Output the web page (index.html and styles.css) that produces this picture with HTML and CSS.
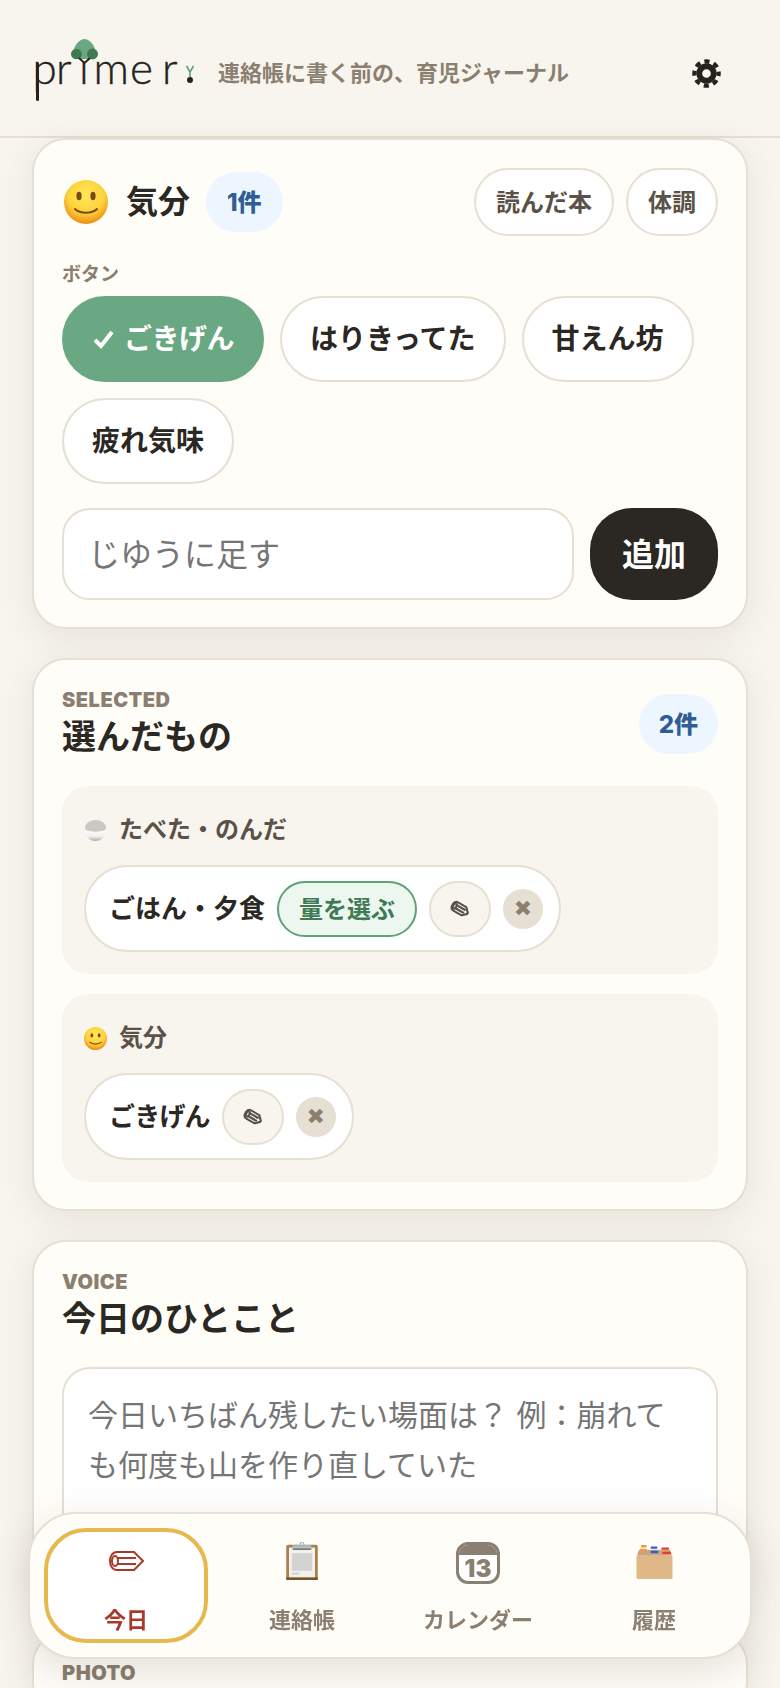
FILE: index.html
```html
<!DOCTYPE html>
<html lang="ja">
<head>
    <meta charset="UTF-8">
    <meta name="viewport" content="width=device-width, initial-scale=1.0">
    <title>primer</title>
    <link rel="stylesheet" href="styles.css">
</head>
<body>
    <header class="app-header">
        <div class="brand">
            <svg class="logo" width="162" height="72" viewBox="0 0 162 72">
                <text class="logo-word" y="46" x="-2.5 21 44 58.5 95 127">primer</text>
                <rect x="1" y="24" width="3" height="39" rx="1.5" fill="#25221e"/>
                <path d="M38 14 C40 6 45 1 49.5 1 C54 1 59 6 61 14 C61 19 57 21 49.5 21 C42 21 38 19 38 14Z" fill="#6aa883"/>
                <ellipse cx="41.5" cy="16" rx="5.5" ry="5.2" fill="#3f7a54"/>
                <ellipse cx="57.5" cy="16" rx="5.5" ry="5.4" fill="#3f7a54"/>
                <path d="M44 20 L49.5 25 L55 20" fill="none" stroke="#25221e" stroke-width="2"/>
                <path d="M151.500 28 L155 34 L158.500 28 M155 34 V39" fill="none" stroke="#5f9f78" stroke-width="1.6"/>
                <circle cx="155" cy="42" r="3" fill="#25221e"/>
            </svg>
            <span class="tagline">連絡帳に書く前の、育児ジャーナル</span>
        </div>
        <svg class="gear" width="29" height="29" viewBox="0 0 30 30">
            <circle cx="15" cy="15" r="7.500" fill="none" stroke="#25221e" stroke-width="6"/>
            <circle cx="15" cy="15" r="12.500" fill="none" stroke="#25221e" stroke-width="4.500" stroke-dasharray="5.300 4.520" stroke-dashoffset="2.600"/>
        </svg>
    </header>

    <main class="page">
        <section class="card">
            <div class="mood-head">
                <svg class="emoji-lg" viewBox="0 0 44 44"><use href="#smile"/></svg>
                <h2 class="mood-title">気分</h2>
                <span class="count count-sm">1件</span>
                <div class="tabs">
                    <button class="tab">読んだ本</button>
                    <button class="tab">体調</button>
                </div>
            </div>
            <div class="field-label">ボタン</div>
            <div class="chips">
                <button class="chip chip-on">
                    <svg class="check" width="23" height="22" viewBox="0 0 23 22"><path d="M3 12 L9 18 L20 4" fill="none" stroke="#fff" stroke-width="4"/></svg>
                    ごきげん
                </button>
                <button class="chip">はりきってた</button>
                <button class="chip">甘えん坊</button>
                <button class="chip">疲れ気味</button>
            </div>
            <div class="add-row">
                <div class="add-input">じゆうに足す</div>
                <button class="add-btn">追加</button>
            </div>
        </section>

        <section class="card">
            <div class="section-head">
                <div>
                    <div class="eyebrow">SELECTED</div>
                    <h2 class="section-title">選んだもの</h2>
                </div>
                <span class="count">2件</span>
            </div>
            <div class="group">
                <div class="group-title">
                    <svg class="emoji-sm" viewBox="0 0 24 24">
                        <defs>
                            <linearGradient id="bowl" x1="0" y1="0" x2="0" y2="1">
                                <stop offset="0" stop-color="#ffffff"/>
                                <stop offset="0.6" stop-color="#f0f0ee"/>
                                <stop offset="1" stop-color="#a9a9a6"/>
                            </linearGradient>
                        </defs>
                        <ellipse cx="12" cy="9" rx="11" ry="8" fill="#c9c8c3"/>
                        <path d="M0.6 11 C5 14 19 14 23.400 11 C23 18 18 23 12 23 C6 23 1 18 0.6 11Z" fill="url(#bowl)"/>
                    </svg>
                    たべた・のんだ
                </div>
                <div class="item">
                    <span class="item-name">ごはん・夕食</span>
                    <button class="amount">量を選ぶ</button>
                    <button class="edit"><svg class="edit-pencil" width="20" height="12" viewBox="0 0 36 22"><use href="#pencil"/></svg></button>
                    <button class="remove">✖</button>
                </div>
            </div>
            <div class="group">
                <div class="group-title">
                    <svg class="emoji-sm" viewBox="0 0 44 44"><use href="#smile"/></svg>
                    気分
                </div>
                <div class="item">
                    <span class="item-name item-name-tight">ごきげん</span>
                    <button class="edit"><svg class="edit-pencil" width="20" height="12" viewBox="0 0 36 22"><use href="#pencil"/></svg></button>
                    <button class="remove">✖</button>
                </div>
            </div>
        </section>

        <section class="card">
            <div class="eyebrow">VOICE</div>
            <h2 class="section-title">今日のひとこと</h2>
            <div class="voice-box">今日いちばん残したい場面は？ 例：崩れても何度も山を作り直していた</div>
        </section>

        <section class="card">
            <div class="eyebrow">PHOTO</div>
        </section>
    </main>

    <nav class="bottom-nav">
        <a class="nav-item nav-active">
            <svg class="nav-icon icon-pencil" width="36" height="22" viewBox="0 0 36 22"><use href="#pencil"/></svg>
            <span class="nav-label">今日</span>
        </a>
        <a class="nav-item">
            <svg class="nav-icon" width="34" height="39" viewBox="0 0 36 42">
                <rect x="1" y="3" width="34" height="38" rx="2" fill="#ac8049"/>
                <rect x="1" y="38" width="34" height="3" rx="1" fill="#7a5528"/>
                <rect x="4" y="6" width="28" height="32" fill="#f1f1f0"/>
                <rect x="7" y="12" width="22" height="19" fill="#d3d3d2"/>
                <rect x="7" y="33" width="8" height="2" fill="#cfcfce"/>
                <rect x="8" y="3.500" width="20" height="4" fill="#b4bcc6"/>
                <rect x="8" y="7" width="20" height="1.500" fill="#6e6a62"/>
                <circle cx="18" cy="2.500" r="2" fill="none" stroke="#a8b3c0" stroke-width="1.200"/>
            </svg>
            <span class="nav-label">連絡帳</span>
        </a>
        <a class="nav-item">
            <span class="nav-icon cal">
                <span class="cal-top"></span>
                <span class="cal-num">13</span>
            </span>
            <span class="nav-label">カレンダー</span>
        </a>
        <a class="nav-item">
            <svg class="nav-icon icon-box" width="37" height="35" viewBox="0 0 38 36">
                <path d="M3 6 L35 6 L37 12 L1 12Z" fill="#c9a677"/>
                <rect x="5" y="1" width="6" height="2.600" rx="1" fill="#ee9a44"/>
                <rect x="4" y="5" width="7" height="2.600" rx="1" fill="#ee9a44"/>
                <rect x="15" y="2.500" width="7" height="2.400" rx="1" fill="#3a57e0"/>
                <rect x="15" y="7" width="8" height="2.400" rx="1" fill="#3a57e0"/>
                <rect x="26" y="3.500" width="8" height="2.400" rx="1" fill="#e8383a"/>
                <rect x="27" y="8" width="9" height="2.400" rx="1" fill="#e8383a"/>
                <rect x="0.5" y="12" width="37" height="24" rx="1.500" fill="#e0b888"/>
            </svg>
            <span class="nav-label">履歴</span>
        </a>
    </nav>

    <svg class="defs" width="0" height="0">
        <defs>
            <radialGradient id="face" cx="50%" cy="35%" r="68%">
                <stop offset="0" stop-color="#ffe85c"/>
                <stop offset="0.6" stop-color="#fdd23a"/>
                <stop offset="1" stop-color="#ea8410"/>
            </radialGradient>
            <symbol id="smile" viewBox="0 0 44 44">
                <circle cx="22" cy="22" r="22" fill="url(#face)"/>
                <ellipse cx="15" cy="16" rx="2.600" ry="4.200" fill="#7a4a12"/>
                <ellipse cx="29" cy="16" rx="2.600" ry="4.200" fill="#7a4a12"/>
                <path d="M11 29 C16 34 28 34 33 29" fill="none" stroke="#7a4a12" stroke-width="2" stroke-linecap="round"/>
            </symbol>
            <symbol id="pencil" viewBox="0 0 36 22">
                <g class="pencil-lines" fill="none" stroke="currentColor">
                    <path d="M9 2 H26 L35 11 L26 20 H9 C4 20 2 15 2 11 C2 7 4 2 9 2Z"/>
                    <ellipse cx="7" cy="11" rx="3" ry="5"/>
                    <path d="M10 8 H28 M10 14 H28"/>
                </g>
            </symbol>
        </defs>
    </svg>
</body>
</html>
```

FILE: styles.css
```css
:root {
    --bg: #f8f5ef;
    --card: #fffdf8;
    --line: #e6dfd3;
    --ink: #2b2722;
    --ink-soft: #5a5248;
    --muted: #8a7f70;
    --green: #6aa883;
    --blue: #2f5d94;
}

* {
    box-sizing: border-box;
}

html, body {
    height: 1688px;
    overflow: hidden;
}

body {
    margin: 0;
    background-color: var(--bg);
    color: var(--ink);
    font-family: Inter, "Noto Sans CJK JP", sans-serif;
}

h2 {
    margin: 0;
}

button {
    font-family: inherit;
    font-weight: 700;
    color: inherit;
    cursor: pointer;
}

.defs {
    position: absolute;
}

.pencil-lines {
    stroke-width: var(--pencil-stroke, 2);
}

.app-header {
    height: 138px;
    padding: 11px 59px 0 35px;
    display: flex;
    align-items: center;
    justify-content: space-between;
    border-bottom: 2px solid var(--line);
}

.brand {
    display: flex;
    align-items: center;
    gap: 21px;
}

.logo {
    flex: none;
    overflow: visible;
}

.logo-word {
    font-family: Lato, sans-serif;
    font-size: 44px;
    font-weight: 300;
    fill: #25221e;
    stroke: #25221e;
    stroke-width: 0.4px;
}

.tagline {
    font-size: 22px;
    font-weight: 700;
    color: var(--muted);
    margin-bottom: 6px;
}

.page {
    padding: 0 32px;
    display: flex;
    flex-direction: column;
    gap: 29px;
}

.card {
    background-color: var(--card);
    border: 2px solid var(--line);
    border-radius: 34px;
    padding: 28px 28px 27px;
    box-shadow: 0 8px 36px rgba(80, 70, 50, 0.1);
}

.mood-head {
    display: flex;
    align-items: center;
}

.emoji-lg {
    width: 44px;
    height: 44px;
    margin-left: 2px;
    margin-right: 18px;
}

.mood-title {
    font-size: 32px;
    line-height: 44px;
    font-weight: 700;
    margin-right: 16px;
}

.count {
    background-color: #edf5ff;
    color: var(--blue);
    font-size: 24px;
    font-weight: 800;
    height: 60px;
    padding: 0 20px 4px;
    display: flex;
    align-items: center;
    border-radius: 30px;
}

.count-sm {
    padding: 0 21px 4px;
}

.tabs {
    margin-left: auto;
    display: flex;
    gap: 12px;
}

.tab {
    height: 68px;
    padding: 0 20px 4px;
    font-size: 24px;
    color: var(--ink-soft);
    background-color: #fff;
    border: 2px solid var(--line);
    border-radius: 34px;
}

.field-label {
    margin-top: 25px;
    font-size: 19px;
    line-height: 28px;
    font-weight: 700;
    color: var(--muted);
}

.chips {
    margin-top: 7px;
    display: flex;
    flex-wrap: wrap;
    gap: 16px;
}

.chip {
    height: 86px;
    padding: 0 28px 4px;
    display: flex;
    align-items: center;
    font-size: 28px;
    background-color: #fff;
    border: 2px solid var(--line);
    border-radius: 43px;
}

.chip-on {
    letter-spacing: -0.5px;
    background-color: var(--green);
    border-color: var(--green);
    color: #fff;
}

.check {
    margin-right: 9px;
    margin-top: 4px;
}

.add-row {
    margin-top: 24px;
    display: flex;
    gap: 16px;
}

.add-input {
    flex: 1;
    height: 92px;
    padding: 0 24px 4px;
    display: flex;
    align-items: center;
    font-size: 32px;
    color: #757575;
    background-color: #fff;
    border: 2px solid var(--line);
    border-radius: 28px;
}

.add-btn {
    width: 128px;
    height: 92px;
    padding: 0 0 4px;
    font-size: 32px;
    color: #fff;
    background-color: var(--ink);
    border: none;
    border-radius: 42px;
}

.section-head {
    display: flex;
    justify-content: space-between;
    align-items: center;
}

.eyebrow {
    font-size: 20px;
    line-height: 24px;
    font-weight: 900;
    letter-spacing: 0.5px;
    margin-bottom: 2px;
    color: var(--muted);
}

.section-title {
    font-size: 34px;
    line-height: 46px;
    font-weight: 700;
}

.group {
    margin-top: 20px;
    padding: 26px 22px 22px;
    background-color: var(--bg);
    border-radius: 26px;
}

.section-head + .group {
    margin-top: 26px;
}

.group-title {
    display: flex;
    align-items: center;
    gap: 12px;
    font-size: 24px;
    line-height: 36px;
    font-weight: 700;
    color: var(--ink-soft);
}

.emoji-sm {
    width: 23px;
    height: 23px;
}

.item {
    margin-top: 17px;
    display: inline-flex;
    align-items: center;
    vertical-align: top;
    height: 87px;
    padding: 0 16px 0 23px;
    background-color: #fff;
    border: 2px solid var(--line);
    border-radius: 44px;
}

.item-name {
    font-size: 26px;
    font-weight: 700;
    margin-right: 12px;
    margin-bottom: 4px;
}

.item-name-tight {
    letter-spacing: -0.8px;
}

.amount {
    height: 56px;
    padding: 0 20px 2px;
    font-size: 24px;
    color: #3d7a55;
    background-color: #edf7f0;
    border: 2px solid #5fa27a;
    border-radius: 28px;
    margin-right: 12px;
}

.edit {
    --pencil-stroke: 4;
    width: 62px;
    height: 56px;
    padding: 0;
    display: flex;
    align-items: center;
    justify-content: center;
    color: var(--ink-soft);
    background-color: var(--bg);
    border: 2px solid var(--line);
    border-radius: 28px;
    margin-right: 12px;
}

.edit-pencil {
    transform: rotate(30deg);
}

.remove {
    width: 40px;
    height: 40px;
    padding: 0;
    font-family: "DejaVu Sans", sans-serif;
    font-size: 22px;
    line-height: 40px;
    font-weight: 400;
    color: var(--muted);
    background-color: var(--line);
    border: none;
    border-radius: 50%;
}

.voice-box {
    margin-top: 25px;
    height: 206px;
    padding: 21px 24px;
    font-size: 30px;
    line-height: 50px;
    color: #757575;
    background-color: #fff;
    border: 2px solid var(--line);
    border-radius: 28px;
}

.bottom-nav {
    position: fixed;
    left: 28px;
    top: 1512px;
    width: 724px;
    height: 147px;
    padding: 14px;
    display: grid;
    grid-template-columns: repeat(4, 164px);
    gap: 12px;
    background-color: var(--card);
    border: 2px solid var(--line);
    border-radius: 48px;
    box-shadow: 0 12px 40px rgba(60, 50, 30, 0.14);
}

.nav-item {
    display: flex;
    flex-direction: column;
    align-items: center;
    justify-content: flex-end;
    padding-bottom: 3px;
    position: relative;
    border: 4px solid transparent;
    border-radius: 42px;
}

.nav-active {
    background-color: #fff;
    border-color: #e5b94e;
}

.nav-icon {
    position: absolute;
    top: 10px;
}

.icon-pencil {
    top: 18px;
    color: #a83a2c;
}

.icon-box {
    top: 12px;
}

.cal {
    width: 44px;
    height: 42px;
    border: 3px solid var(--muted);
    border-radius: 12px;
    background-color: #fff;
    display: flex;
    flex-direction: column;
    align-items: center;
    overflow: hidden;
}

.cal-top {
    width: 100%;
    height: 10px;
    flex: none;
    background-color: var(--muted);
}

.cal-num {
    font-size: 24px;
    line-height: 27px;
    font-weight: 900;
    color: var(--muted);
}

.nav-label {
    font-size: 22px;
    line-height: 32px;
    font-weight: 700;
    color: var(--muted);
}

.nav-active .nav-label {
    color: #a83a2c;
}
```
